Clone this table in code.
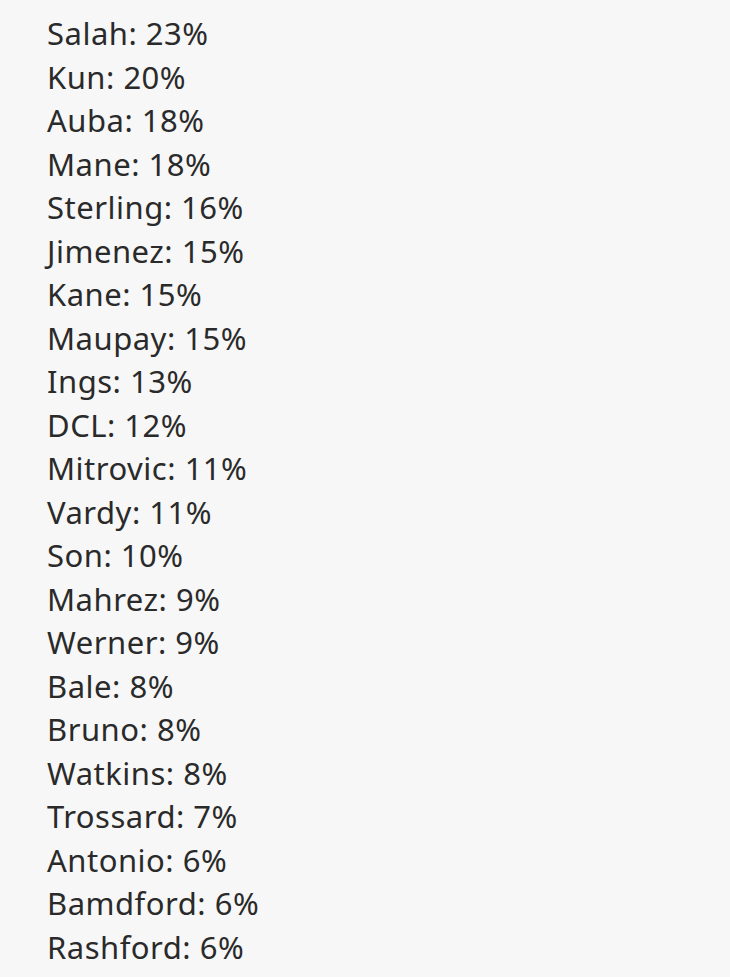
const scorers = [
  ["Salah", 23],
  ["Kun", 20],
  ["Auba", 18],
  ["Mane", 18],
  ["Sterling", 16],
  ["Jimenez", 15],
  ["Kane", 15],
  ["Maupay", 15],
  ["Ings", 13],
  ["DCL", 12],
  ["Mitrovic", 11],
  ["Vardy", 11],
  ["Son", 10],
  ["Mahrez", 9],
  ["Werner", 9],
  ["Bale", 8],
  ["Bruno", 8],
  ["Watkins", 8],
  ["Trossard", 7],
  ["Antonio", 6],
  ["Bamdford", 6],
  ["Rashford", 6],
];

export default function App() {
  return (
    <div className="w-[730px] h-[977px] overflow-hidden bg-[#f7f7f7] pl-[47px] pt-[12px] font-['Noto_Sans',sans-serif] text-[31px] leading-[43.5px] tracking-[0.5px] text-[#2a2a2a]">
      {scorers.map(([name, pct]) => (
        <div key={name}>
          {name}: {pct}%
        </div>
      ))}
    </div>
  );
}
